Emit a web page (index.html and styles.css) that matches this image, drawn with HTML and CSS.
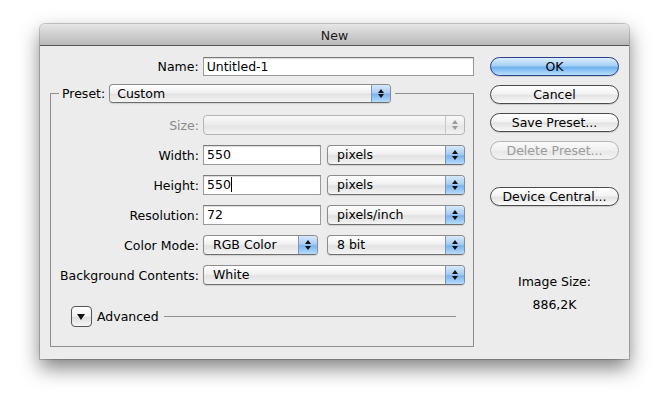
FILE: index.html
```html
<!DOCTYPE html>
<html lang="en">
<head>
  <meta charset="UTF-8" />
  <title>New</title>
  <link rel="stylesheet" href="styles.css">
</head>
<body>

  <div class="window">
    <div class="titlebar">New</div>

    <div class="content">
      <!-- Levy sloupec: formular -->
      <div class="form">
        <div class="row name-row">
          <label class="lbl">Name:</label>
          <div class="field w-name">Untitled-1</div>
        </div>

        <fieldset class="group">
          <legend>
            <span class="legend-inner">
              <span class="lbl-inline">Preset:</span>
              <span class="select w-preset"><span class="val">Custom</span><span class="stepper"></span></span>
            </span>
          </legend>

          <div class="rows">
            <div class="row">
              <label class="lbl disabled">Size:</label>
              <div class="select disabled w-full"><span class="val"></span><span class="stepper"></span></div>
            </div>
            <div class="row">
              <label class="lbl">Width:</label>
              <div class="field w-num">550</div>
              <div class="select w-unit"><span class="val">pixels</span><span class="stepper"></span></div>
            </div>
            <div class="row">
              <label class="lbl">Height:</label>
              <div class="field w-num">550<span class="caret"></span></div>
              <div class="select w-unit"><span class="val">pixels</span><span class="stepper"></span></div>
            </div>
            <div class="row">
              <label class="lbl">Resolution:</label>
              <div class="field w-num">72</div>
              <div class="select w-unit"><span class="val">pixels/inch</span><span class="stepper"></span></div>
            </div>
            <div class="row">
              <label class="lbl">Color Mode:</label>
              <div class="select w-mode"><span class="val">RGB Color</span><span class="stepper"></span></div>
              <div class="select w-unit bits"><span class="val">8 bit</span><span class="stepper"></span></div>
            </div>
            <div class="row">
              <label class="lbl">Background Contents:</label>
              <div class="select w-full"><span class="val">White</span><span class="stepper"></span></div>
            </div>
          </div>

          <div class="advanced">
            <span class="disclosure"></span>
            <span class="adv-text">Advanced</span>
            <span class="adv-line"></span>
          </div>
        </fieldset>
      </div>

      <!-- Pravy sloupec: tlacitka -->
      <div class="side">
        <div class="btn default">OK</div>
        <div class="btn">Cancel</div>
        <div class="btn">Save Preset...</div>
        <div class="btn disabled">Delete Preset...</div>
        <div class="btn device">Device Central...</div>

        <div class="size-info">
          <div>Image Size:</div>
          <div class="size-val">886,2K</div>
        </div>
      </div>
    </div>
  </div>

</body>
</html>
```

FILE: styles.css
```css
html, body {
  min-height: 100%;
}

body {
  margin: 0;
  padding: 24px 0 40px 40px;
  background: #fff;
  font-family: 'DejaVu Sans', sans-serif;
  font-size: 12.5px;
  color: #000;
}

.window {
  width: 589px;
  background: #ececec;
  border-radius: 5px 5px 0 0;
  box-shadow: 0 9px 20px rgba(0,0,0,0.5), 0 0 0 1px rgba(0,0,0,0.2);
}

.titlebar {
  height: 21px;
  line-height: 24px;
  text-align: center;
  color: #1a1a1a;
  border-radius: 5px 5px 0 0;
  background: linear-gradient(to bottom, #e6e6e6, #cfcfcf 50%, #b9b9b9);
  border-bottom: 1px solid #555;
}

.content {
  display: flex;
  gap: 16px;
  padding: 11px 10px 12px 10px;
}

.form {
  width: 424px;
}

/* Radky formulare */
.row {
  display: flex;
  align-items: center;
  height: 20px;
}

.lbl {
  width: 148px;
  margin-right: 4px;
  text-align: right;
  white-space: nowrap;
}

.name-row {
  height: 19px;
}

.name-row .lbl {
  width: 149px;
}

.lbl.disabled {
  color: #8a8a8a;
}

.field {
  box-sizing: border-box;
  height: 20px;
  line-height: 18px;
  padding-left: 3px;
  background: #fff;
  border: 1px solid #9a9a9a;
  border-top-color: #7a7a7a;
  box-shadow: inset 0 1px 1px rgba(0,0,0,0.15);
}

.name-row .field {
  height: 19px;
  line-height: 17px;
}

.caret {
  display: inline-block;
  width: 1px;
  height: 15px;
  background: #000;
  vertical-align: -3px;
}

.w-name { width: 272px; }
.w-num { width: 118px; margin-right: 6px; }
.w-unit { width: 138px; }
.w-mode { width: 115px; margin-right: 9px; }
.w-full { width: 262px; }
.w-preset { width: 282px; }

/* Rozbalovaci nabidka */
.select {
  box-sizing: border-box;
  display: flex;
  height: 20px;
  border: 1px solid #8c8c8c;
  border-bottom-color: #6e6e6e;
  border-radius: 4px;
  background: linear-gradient(to bottom, #fff, #f1f1f1 45%, #e2e2e2 55%, #f4f4f4);
  box-shadow: 0 1px 1px rgba(0,0,0,0.12);
  overflow: hidden;
}

.select .val {
  flex: 1;
  line-height: 18px;
  padding-left: 9px;
  white-space: nowrap;
}

.stepper {
  position: relative;
  width: 18px;
  border-left: 1px solid #7f95b8;
  background: linear-gradient(to bottom, #d7e9fb, #a9cdf3 45%, #7cb4ee 55%, #b6dcfb);
}

.stepper::before,
.stepper::after {
  content: "";
  position: absolute;
  left: 6px;
  border-left: 3px solid transparent;
  border-right: 3px solid transparent;
}

.stepper::before {
  top: 4px;
  border-bottom: 4px solid #111;
}

.stepper::after {
  bottom: 4px;
  border-top: 4px solid #111;
}

.select.disabled {
  border-color: #b4b4b4;
  box-shadow: none;
  background: linear-gradient(to bottom, #f8f8f8, #ececec 50%, #e4e4e4 55%, #f2f2f2);
}

.select.disabled .stepper {
  background: transparent;
  border-left-color: #c8c8c8;
}

.select.disabled .stepper::before { border-bottom-color: #9c9c9c; }
.select.disabled .stepper::after { border-top-color: #9c9c9c; }

/* Skupina s predvolbou */
.group {
  margin: 8px 0 0 0;
  padding: 0 0 19px 0;
  border: 1px solid #8f8f8f;
  width: 424px;
  box-sizing: border-box;
  min-width: 0;
}

.group legend {
  margin-left: 8px;
  padding: 0 4px 0 3px;
}

.legend-inner {
  display: flex;
  align-items: center;
  height: 19px;
}

.lbl-inline {
  margin-right: 4px;
}

.w-preset {
  height: 19px;
}

.w-preset .val {
  line-height: 17px;
  padding-left: 7px;
}

.rows {
  display: flex;
  flex-direction: column;
  gap: 10px;
  margin-top: 12px;
}

.advanced {
  display: flex;
  align-items: center;
  margin: 21px 17px 0 20px;
  height: 21px;
}

.disclosure {
  position: relative;
  box-sizing: border-box;
  width: 21px;
  height: 21px;
  border: 1px solid #555;
  border-radius: 4px;
  background: linear-gradient(to bottom, #fff, #efefef 50%, #dedede 55%, #f6f6f6);
}

.disclosure::after {
  content: "";
  position: absolute;
  left: 5px;
  top: 7px;
  border-left: 4.5px solid transparent;
  border-right: 4.5px solid transparent;
  border-top: 6px solid #111;
}

.adv-text {
  margin-left: 5px;
}

.adv-line {
  flex: 1;
  height: 1px;
  margin-left: 5px;
  background: #8f8f8f;
}

/* Tlacitka vpravo */
.side {
  width: 129px;
  display: flex;
  flex-direction: column;
  gap: 9px;
}

.btn {
  box-sizing: border-box;
  height: 19px;
  line-height: 17px;
  text-align: center;
  border: 1px solid #4a4a4a;
  border-radius: 10px;
  background: linear-gradient(to bottom, #fff, #f3f3f3 45%, #e3e3e3 55%, #fafafa);
  box-shadow: 0 1px 1px rgba(0,0,0,0.15);
}

.btn.default {
  border-color: #2b3f8f;
  background: linear-gradient(to bottom, #dceefe, #a6cff5 45%, #6fb0f0 55%, #b9e0fe);
}

.btn.disabled {
  color: #9b9b9b;
  border-color: #b5b5b5;
  box-shadow: none;
  background: linear-gradient(to bottom, #fafafa, #efefef 50%, #e8e8e8 55%, #f4f4f4);
}

.btn.device {
  margin-top: 18px;
}

.size-info {
  margin-top: 59px;
  text-align: center;
  line-height: 16px;
}

.size-val {
  margin-top: 7px;
}
```
